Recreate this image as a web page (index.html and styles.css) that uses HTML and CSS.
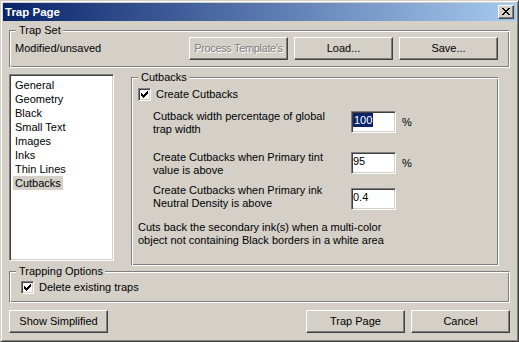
FILE: index.html
```html
<!DOCTYPE html>
<html>
<head>
<meta charset="utf-8">
<title>Trap Page</title>
<link rel="stylesheet" href="styles.css">
</head>
<body>
<div class="window">
  <div class="titlebar">
    <span class="title">Trap Page</span>
    <span class="close-btn">
      <svg width="8" height="7" viewBox="0 0 8 7" shape-rendering="crispEdges"><path fill="#000" d="M0 0h2v1h-2z M6 0h2v1h-2z M1 1h2v1h-2z M5 1h2v1h-2z M2 2h4v1h-4z M3 3h2v1h-2z M2 4h4v1h-4z M1 5h2v1h-2z M5 5h2v1h-2z M0 6h2v1h-2z M6 6h2v1h-2z"/></svg>
    </span>
  </div>
  <div class="content">
    <div class="group trapset">
      <span class="group-label">Trap Set</span>
      <span class="status">Modified/unsaved</span>
      <div class="btn-row">
        <div class="btn disabled">Process Template's</div>
        <div class="btn">Load...</div>
        <div class="btn">Save...</div>
      </div>
    </div>

    <div class="middle">
      <ul class="listbox">
        <li><span class="item">General</span></li>
        <li><span class="item">Geometry</span></li>
        <li><span class="item">Black</span></li>
        <li><span class="item">Small Text</span></li>
        <li><span class="item">Images</span></li>
        <li><span class="item">Inks</span></li>
        <li><span class="item">Thin Lines</span></li>
        <li><span class="item selected">Cutbacks</span></li>
      </ul>

      <div class="group cutbacks">
        <span class="group-label">Cutbacks</span>
        <div class="check-row">
          <span class="checkbox"><svg width="11" height="11" viewBox="0 0 11 11" shape-rendering="crispEdges"><path fill="#000" d="M8 2h1v1h-1z M7 3h2v1h-2z M2 4h1v1h-1z M6 4h3v1h-3z M2 5h2v1h-2z M5 5h3v1h-3z M2 6h5v1h-5z M3 7h3v1h-3z M4 8h1v1h-1z"/></svg></span>
          <span>Create Cutbacks</span>
        </div>

        <div class="field field-1">
          <div class="field-label">Cutback width percentage of global<br>trap width</div>
          <div class="field-control">
            <div class="input"><span class="sel">100</span></div>
            <span class="unit">%</span>
          </div>
        </div>

        <div class="field field-2">
          <div class="field-label">Create Cutbacks when Primary tint<br>value is above</div>
          <div class="field-control">
            <div class="input">95</div>
            <span class="unit">%</span>
          </div>
        </div>

        <div class="field field-3">
          <div class="field-label">Create Cutbacks when Primary ink<br>Neutral Density is above</div>
          <div class="field-control">
            <div class="input">0.4</div>
          </div>
        </div>

        <p class="description">Cuts back the secondary ink(s) when a multi-color<br>object not containing Black borders in a white area</p>
      </div>
    </div>

    <div class="group trapping">
      <span class="group-label">Trapping Options</span>
      <div class="check-row">
        <span class="checkbox"><svg width="11" height="11" viewBox="0 0 11 11" shape-rendering="crispEdges"><path fill="#000" d="M8 2h1v1h-1z M7 3h2v1h-2z M2 4h1v1h-1z M6 4h3v1h-3z M2 5h2v1h-2z M5 5h3v1h-3z M2 6h5v1h-5z M3 7h3v1h-3z M4 8h1v1h-1z"/></svg></span>
        <span>Delete existing traps</span>
      </div>
    </div>

    <div class="footer">
      <div class="btn">Show Simplified</div>
      <div class="btn push">Trap Page</div>
      <div class="btn">Cancel</div>
    </div>
  </div>
</div>
</body>
</html>
```

FILE: styles.css
```css
* { box-sizing: border-box; }

body {
  margin: 0;
  background: #d4d0c8;
  font-family: "Liberation Sans", Arial, sans-serif;
  font-size: 11px;
  line-height: 13px;
  color: #000;
}

.window {
  width: 519px;
  height: 342px;
  background: #d4d0c8;
  border: 1px solid;
  border-color: #d4d0c8 #404040 #404040 #d4d0c8;
  box-shadow: inset 1px 1px #fff, inset -1px -1px #808080;
  padding: 2px;
  display: flex;
  flex-direction: column;
}

.titlebar {
  height: 18px;
  flex: none;
  background: linear-gradient(to right, #0a246a, #a6caf0);
  display: flex;
  align-items: center;
  padding: 0 2px;
}

.title {
  color: #fff;
  font-weight: bold;
  font-size: 11.5px;
  flex: 1;
}

.close-btn {
  width: 16px;
  height: 14px;
  background: #d4d0c8;
  border: 1px solid;
  border-color: #fff #404040 #404040 #fff;
  box-shadow: inset -1px -1px #808080;
  padding: 2px 0 0 3px;
}

.close-btn svg { display: block; }

.content {
  flex: 1;
  padding: 9px 6px 6px;
  display: flex;
  flex-direction: column;
}

.group {
  position: relative;
  border: 1px solid;
  border-color: #808080 #fff #fff #808080;
  box-shadow: inset 1px 1px #fff, inset -1px -1px #808080;
}

.group-label {
  position: absolute;
  top: -7px;
  left: 6px;
  padding: 0 2px 0 3px;
  background: #d4d0c8;
  line-height: 13px;
  white-space: nowrap;
}

.trapset {
  height: 38px;
  display: flex;
  align-items: flex-start;
  padding: 6px 11px 0 5px;
}

.status { line-height: 23px; }

.btn-row {
  margin-left: auto;
  display: flex;
  gap: 6px;
}

.btn {
  width: 99px;
  height: 23px;
  display: flex;
  align-items: center;
  justify-content: center;
  padding-bottom: 1px;
  background: #d4d0c8;
  border: 1px solid;
  border-color: #fff #404040 #404040 #fff;
  box-shadow: inset -1px -1px #808080;
  white-space: nowrap;
}

.btn.disabled {
  color: #808080;
  text-shadow: 1px 1px #fff;
  letter-spacing: -0.35px;
}

.middle {
  display: flex;
  align-items: flex-start;
  margin-top: 6px;
}

.listbox {
  width: 105px;
  height: 187px;
  margin: 0;
  padding: 3px 0 0 3px;
  list-style: none;
  background: #fff;
  border: 1px solid;
  border-color: #808080 #fff #fff #808080;
  box-shadow: inset 1px 1px #404040, inset -1px -1px #d4d0c8;
}

.listbox li {
  height: 14px;
  line-height: 14px;
}

.item {
  display: inline-block;
  padding: 0 2px;
}

.item.selected { background: #d4d0c8; }

.cutbacks {
  width: 368px;
  height: 189px;
  margin-left: 17px;
  margin-top: 3px;
  padding: 10px 0 0 6px;
}

.check-row {
  display: flex;
  align-items: center;
  gap: 5px;
  height: 13px;
}

.checkbox {
  width: 13px;
  height: 13px;
  flex: none;
  background: #fff;
  border: 1px solid;
  border-color: #808080 #fff #fff #808080;
  box-shadow: inset 1px 1px #404040, inset -1px -1px #d4d0c8;
}

.checkbox svg { display: block; }

.field {
  display: flex;
  align-items: flex-start;
  margin-left: 15px;
}

.field-1 { margin-top: 9px; }
.field-2 { margin-top: 15px; }
.field-3 { margin-top: 7px; }

.field-label { width: 198px; }

.field-control {
  display: flex;
  align-items: center;
  gap: 6px;
  margin-top: 1px;
}

.field-3 .field-control { margin-top: 4px; }

.input {
  width: 45px;
  height: 22px;
  padding: 1px 0 0 1px;
  line-height: 14px;
  background: #fff;
  border: 1px solid;
  border-color: #808080 #fff #fff #808080;
  box-shadow: inset 1px 1px #404040, inset -1px -1px #d4d0c8;
}

.input .sel {
  display: inline-block;
  padding: 0 1px;
  background: #0a246a;
  color: #fff;
}

.description {
  margin: 11px 0 0;
}

.trapping {
  height: 32px;
  margin-top: 5px;
  padding: 9px 0 0 11px;
}

.footer {
  display: flex;
  gap: 6px;
  margin-top: 7px;
}

.push { margin-left: auto; }
```
